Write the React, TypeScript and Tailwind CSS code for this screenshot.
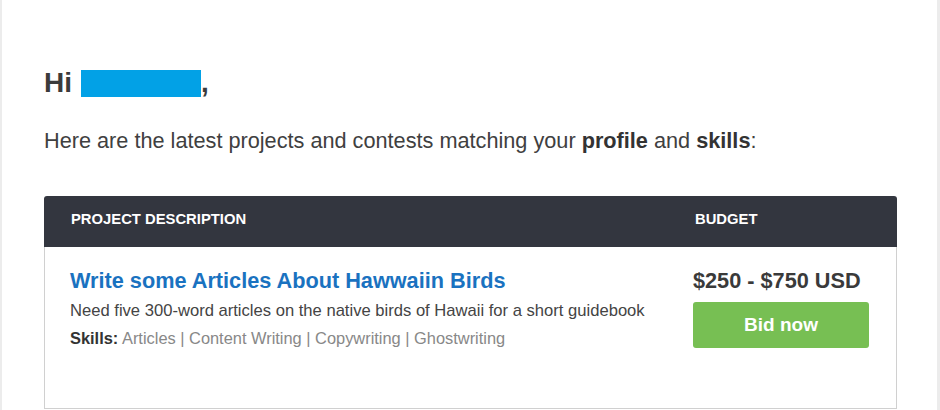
export default function App() {
  const skills = ["Articles", "Content Writing", "Copywriting", "Ghostwriting"];

  return (
    <div className="h-[410px] w-[940px] overflow-hidden bg-[#ececec] pl-[2px] pr-[3px] font-['Liberation_Sans',Arial,sans-serif]">
      <div className="h-full bg-white pl-[42px] pr-[40px] pt-[66px]">
        <h1 className="flex items-end text-[28px] font-bold leading-[34px] text-[#3b3b3b]">
          Hi
          <span className="mb-[3px] ml-[9px] inline-block h-[27px] w-[120px] bg-[#02a1e6]" />
          <span>,</span>
        </h1>
        <p className="mt-[28px] text-[21.7px] leading-[26px] text-[#404040]">
          Here are the latest projects and contests matching your <b className="text-[#333]">profile</b> and{" "}
          <b className="text-[#333]">skills</b>:
        </p>

        <div className="mt-[42px] w-[853px]">
          <div className="flex h-[51px] items-center rounded-t-[3px] bg-[#33363f] pb-[4px] text-[14.8px] font-bold text-white">
            <div className="flex-1 pl-[27px]">PROJECT DESCRIPTION</div>
            <div className="w-[202px]">BUDGET</div>
          </div>
          <div className="flex h-[162px] border border-t-0 border-[#d0d0d0] bg-white pt-[20px]">
            <div className="flex-1 pl-[25px]">
              <a className="block text-[21.7px] font-bold leading-[28px] text-[#1a72c0]" href="#">
                Write some Articles About Hawwaiin Birds
              </a>
              <p className="mt-[6px] text-[16.6px] leading-[20px] text-[#444]">
                Need five 300-word articles on the native birds of Hawaii for a short guidebook
              </p>
              <p className="mt-[7px] text-[16.4px] leading-[20px] text-[#888]">
                <b className="text-[#333]">Skills:</b> {skills.join(" | ")}
              </p>
            </div>
            <div className="w-[203px]">
              <div className="text-[21.7px] font-bold leading-[28px] text-[#3a3a3a]">$250 - $750 USD</div>
              <button className="mt-[7px] h-[46px] w-[176px] rounded-[3px] bg-[#77bf53] text-[19px] font-bold text-white">
                Bid now
              </button>
            </div>
          </div>
        </div>
      </div>
    </div>
  );
}
